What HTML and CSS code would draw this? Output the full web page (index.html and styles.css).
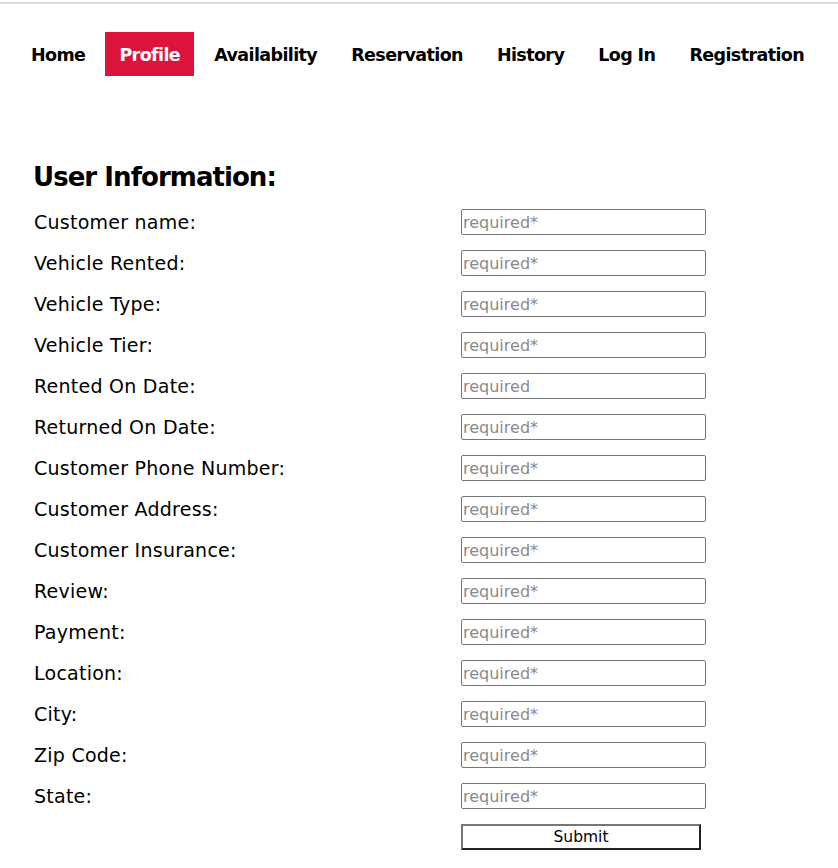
FILE: index.html
```html
<!DOCTYPE html>
<html>
<head>
<meta charset="utf-8">
<link rel="stylesheet" href="styles.css">
</head>
<body>
<div class="topline"></div>
<nav class="nav">
  <a class="nav-item" href="#">Home</a>
  <a class="nav-item active" href="#">Profile</a>
  <a class="nav-item" href="#">Availability</a>
  <a class="nav-item" href="#">Reservation</a>
  <a class="nav-item" href="#">History</a>
  <a class="nav-item" href="#">Log In</a>
  <a class="nav-item" href="#">Registration</a>
</nav>
<main class="content">
  <h2 class="title">User Information:</h2>
  <form class="form">
    <label class="label">Customer name:</label><input class="field" placeholder="required*">
    <label class="label">Vehicle Rented:</label><input class="field" placeholder="required*">
    <label class="label">Vehicle Type:</label><input class="field" placeholder="required*">
    <label class="label">Vehicle Tier:</label><input class="field" placeholder="required*">
    <label class="label">Rented On Date:</label><input class="field" placeholder="required">
    <label class="label">Returned On Date:</label><input class="field" placeholder="required*">
    <label class="label">Customer Phone Number:</label><input class="field" placeholder="required*">
    <label class="label">Customer Address:</label><input class="field" placeholder="required*">
    <label class="label">Customer Insurance:</label><input class="field" placeholder="required*">
    <label class="label">Review:</label><input class="field" placeholder="required*">
    <label class="label">Payment:</label><input class="field" placeholder="required*">
    <label class="label">Location:</label><input class="field" placeholder="required*">
    <label class="label">City:</label><input class="field" placeholder="required*">
    <label class="label">Zip Code:</label><input class="field" placeholder="required*">
    <label class="label">State:</label><input class="field" placeholder="required*">
    <span></span><button class="submit" type="button">Submit</button>
  </form>
</main>
</body>
</html>
```
FILE: styles.css
```css
html, body {
  margin: 0;
  padding: 0;
  background: #fff;
  font-family: "DejaVu Sans", sans-serif;
  color: #000;
}
.topline {
  margin-top: 2px;
  height: 2px;
  background: #dddde5;
}
.nav {
  display: flex;
  flex-wrap: nowrap;
  gap: 6px;
  margin: 28px 0 0 17px;
}
.nav-item {
  display: block;
  white-space: nowrap;
  padding: 0 14px;
  height: 44px;
  line-height: 47px;
  font-size: 17.5px;
  letter-spacing: -0.6px;
  font-weight: bold;
  color: #000;
  text-decoration: none;
}
.nav-item.active {
  background: #dc143c;
  color: #fff;
}
.content {
  padding: 0 0 0 33px;
}
.title {
  margin: 84px 0 0 0;
  font-size: 26px;
  letter-spacing: -0.95px;
  line-height: 34px;
  font-weight: bold;
}
.form {
  display: grid;
  grid-template-columns: 428px 245px;
  grid-auto-rows: 26px;
  row-gap: 15px;
  align-items: center;
  margin-top: 15px;
}
.label {
  padding-left: 1px;
  font-size: 19px;
  letter-spacing: 0.25px;
  line-height: 26px;
  white-space: nowrap;
}
.field {
  box-sizing: border-box;
  width: 245px;
  height: 26px;
  margin: 0;
  padding: 0 1px;
  border: 1px solid #767676;
  border-radius: 2px;
  font-family: "DejaVu Sans", sans-serif;
  font-size: 16px;
}
.field::placeholder {
  color: #8a8a8a;
}
.submit {
  box-sizing: border-box;
  width: 240px;
  height: 26px;
  margin: 0;
  padding: 0;
  background: #fff;
  border: 2px solid;
  border-color: #767676 #222 #222 #767676;
  font-family: "DejaVu Sans", sans-serif;
  font-size: 15.5px;
  color: #000;
}
```
